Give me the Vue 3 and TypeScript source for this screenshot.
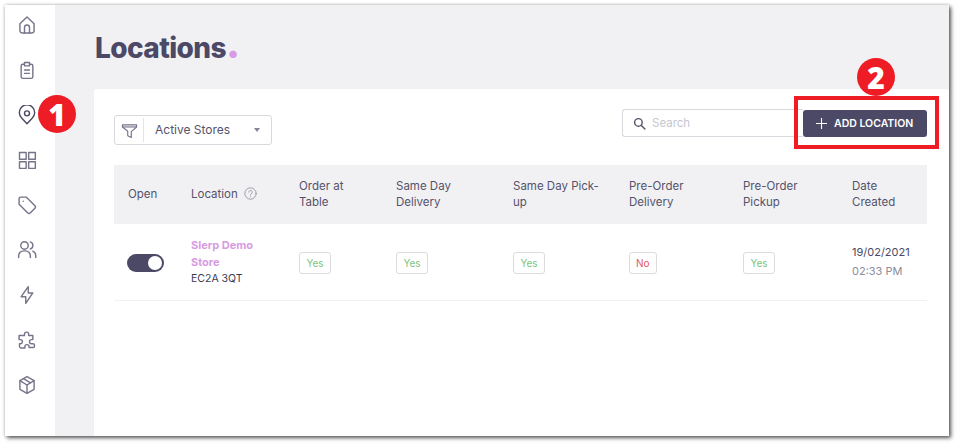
<template>
  <div class="page">
    <div class="window">
      <nav class="sidebar">
        <span v-for="icon in icons" :key="icon.name" class="nav-icon" :class="{ 'is-active': icon.name === 'pin' }">
          <svg width="20" height="20" viewBox="0 0 24 24" fill="none" stroke="currentColor" stroke-width="1.7" stroke-linecap="round" stroke-linejoin="round">
            <path v-for="d in icon.paths" :key="d" :d="d" />
          </svg>
        </span>
      </nav>

      <main class="main">
        <h1 class="title">Locations<span class="title__dot">.</span></h1>

        <section class="card">
          <div class="toolbar">
            <div class="filter">
              <span class="filter__icon">
                <svg width="17" height="17" viewBox="0 0 24 24" fill="none" stroke="currentColor" stroke-width="1.6" stroke-linejoin="round">
                  <path d="M2 4h20v3l-7.5 6.5V22l-5-2.500v-6.500L2 7z" />
                  <path d="M2 7h20" />
                </svg>
              </span>
              <span class="filter__label">Active Stores</span>
              <span class="filter__caret"></span>
            </div>

            <div class="actions">
              <label class="search">
                <svg width="13" height="13" viewBox="0 0 24 24" fill="none" stroke="#55536b" stroke-width="2.600" stroke-linecap="round">
                  <circle cx="10" cy="10" r="7" />
                  <path d="M15.500 15.500L22 22" />
                </svg>
                <span class="search__placeholder">Search</span>
              </label>
              <button type="button" class="add-button">
                <svg width="11" height="11" viewBox="0 0 11 11" stroke="#fff" stroke-width="1.100">
                  <path d="M5.500 0v11M0 5.500h11" />
                </svg>
                ADD LOCATION
              </button>
            </div>
          </div>

          <div class="table">
            <div class="table__head">
              <div v-for="col in columns" :key="col" class="th">
                <span>{{ col }}</span>
                <svg v-if="col === 'Location'" class="help" width="13" height="13" viewBox="0 0 24 24" fill="none" stroke="#9a99a8" stroke-width="1.800" stroke-linecap="round">
                  <circle cx="12" cy="12" r="10.500" />
                  <path d="M8.800 9.500a3.200 3.200 0 1 1 4.800 2.800c-1 .6-1.600 1.200-1.600 2.400M12 18v.1" />
                </svg>
              </div>
            </div>

            <div class="table__row">
              <div class="td td--nudged">
                <span class="toggle"><span class="toggle__knob"></span></span>
              </div>
              <div class="td">
                <a class="store-name">Slerp Demo Store</a>
                <div class="postcode">EC2A 3QT</div>
              </div>
              <div v-for="(flag, i) in flags" :key="i" class="td td--nudged">
                <span class="flag" :class="flag === 'Yes' ? 'flag--yes' : 'flag--no'">{{ flag }}</span>
              </div>
              <div class="td">
                <div class="date">19/02/2021</div>
                <div class="time">02:33 PM</div>
              </div>
            </div>
          </div>
        </section>
      </main>

      <span class="badge badge--one">1</span>
      <span class="badge badge--two">2</span>
      <span class="highlight"></span>
    </div>
  </div>
</template>

<script setup lang="ts">
const columns = [
  'Open',
  'Location',
  'Order at Table',
  'Same Day Delivery',
  'Same Day Pick-up',
  'Pre-Order Delivery',
  'Pre-Order Pickup',
  'Date Created',
]

const flags = ['Yes', 'Yes', 'Yes', 'No', 'Yes']

const icons = [
  {
    name: 'home',
    paths: [
      'M3.500 10.500L12 2.500l8.500 8V19a2.500 2.500 0 0 1-2.500 2.500H6A2.500 2.500 0 0 1 3.500 19z',
      'M9 21.500V15a3 3 0 0 1 6 0v6.500',
    ],
  },
  {
    name: 'clipboard',
    paths: [
      'M8.500 5H7a2 2 0 0 0-2 2v13a2 2 0 0 0 2 2h10a2 2 0 0 0 2-2V7a2 2 0 0 0-2-2h-1.500',
      'M9 3h6v4H9z',
      'M9 12h6M9 16h6',
    ],
  },
  {
    name: 'pin',
    paths: [
      'M12 22.500l-6.200-6.700a9.200 9.200 0 1 1 12.400 0z',
      'M12 13a3 3 0 1 0 0-6 3 3 0 0 0 0 6z',
    ],
  },
  {
    name: 'grid',
    paths: ['M3 3h8v8H3z', 'M14 3h8v8h-8z', 'M3 14h8v8H3z', 'M14 14h8v8h-8z'],
  },
  {
    name: 'tag',
    paths: [
      'M2.500 4.500a2 2 0 0 1 2-2h6.500l10.500 10.500a2 2 0 0 1 0 2.800l-5.700 5.700a2 2 0 0 1-2.800 0L2.500 11z',
      'M7.500 7.500v.1',
    ],
  },
  {
    name: 'users',
    paths: [
      'M2 21v-2a6 6 0 0 1 6-6h2a6 6 0 0 1 6 6v2',
      'M9 11a4.500 4.500 0 1 0 0-9 4.500 4.500 0 0 0 0 9z',
      'M16 2.300a4.500 4.500 0 0 1 0 8.500',
      'M19 13.400a6 6 0 0 1 3.500 5.600v2',
    ],
  },
  {
    name: 'zap',
    paths: ['M13.500 2v7.500H19L10.500 22v-8H5z'],
  },
  {
    name: 'puzzle',
    paths: [
      'M9 5a2.500 2.500 0 0 1 5 0v1.500h5v5h-1.500a2.500 2.500 0 0 0 0 5H19a2 2 0 0 1 2 2v1a1.500 1.500 0 0 1-1.500 1.500h-5V20a2.500 2.500 0 0 0-5 0v1.500h-5a2 2 0 0 1-1.500-2v-3H4a2.500 2.500 0 0 0 0-5H2.500v-5H9z',
    ],
  },
  {
    name: 'box',
    paths: [
      'M12 2l8.500 4.800v10.400L12 22l-8.500-4.800V6.800z',
      'M3.500 6.800L12 12l8.500-5.200',
      'M12 12v10',
      'M7.800 4.400l8.400 5',
    ],
  },
]
</script>

<style>
html,
body {
  margin: 0;
  background: #fff;
}
</style>

<style scoped>
.page {
  width: 958px;
  height: 445px;
  padding: 5px 0 0 5px;
  box-sizing: border-box;
  overflow: hidden;
  font-family: Inter, "Open Sans", sans-serif;
  color: #4b4966;
}

.window {
  position: relative;
  display: flex;
  width: 944px;
  height: 431px;
  background: #f1f1f4;
  box-shadow: 2px 2px 4px rgba(40, 40, 40, 0.75), 0 0 3px rgba(40, 40, 40, 0.25);
}

.sidebar {
  display: flex;
  flex-direction: column;
  align-items: center;
  gap: 25px;
  width: 50px;
  flex: none;
  box-sizing: border-box;
  padding: 10px 6px 0 0;
  background: #fff;
}

.nav-icon {
  display: flex;
  align-items: center;
  justify-content: center;
  width: 22px;
  height: 20px;
  color: #75748a;
}

.nav-icon.is-active {
  color: #4b4966;
}

.main {
  display: flex;
  flex-direction: column;
  flex: 1;
  min-width: 0;
  padding-left: 39px;
}

.title {
  height: 84px;
  margin: 0;
  padding: 23px 0 0 1px;
  box-sizing: border-box;
  font-size: 28px;
  line-height: 40px;
  font-weight: 800;
  letter-spacing: -0.6px;
  color: #4b4966;
}

.title__dot {
  color: #d89be3;
  font-size: 40px;
  line-height: 20px;
}

.card {
  flex: 1;
  padding: 20px 22px 0 20px;
  background: #fff;
  border-radius: 3px 3px 0 0;
}

.toolbar {
  display: flex;
  justify-content: space-between;
  align-items: flex-start;
  height: 56px;
}

.filter {
  display: flex;
  align-items: center;
  width: 158px;
  height: 30px;
  margin-top: 6px;
  box-sizing: border-box;
  border: 1px solid #d8d8de;
  border-radius: 3px;
  font-size: 12px;
}

.filter__icon {
  display: flex;
  align-items: center;
  justify-content: center;
  width: 28px;
  height: 24px;
  border-right: 1px solid #e4e4e8;
  color: #75748a;
}

.filter__label {
  flex: 1;
  padding: 0 0 1px 11px;
  color: #55536b;
}

.filter__caret {
  width: 0;
  height: 0;
  margin-right: 11px;
  border: 3.500px solid transparent;
  border-top: 4px solid #85849a;
  border-bottom: 0;
}

.actions {
  display: flex;
  align-items: center;
}

.search {
  display: flex;
  align-items: center;
  gap: 6px;
  width: 181px;
  height: 28px;
  padding-left: 10px;
  box-sizing: border-box;
  border: 1px solid #d8d8de;
  border-right: 0;
  border-radius: 3px 0 0 3px;
  font-size: 11.500px;
}

.search__placeholder {
  color: #c6c6d0;
}

.add-button {
  display: flex;
  align-items: center;
  gap: 7px;
  width: 124px;
  height: 27px;
  padding: 0 0 0 13px;
  border: 0;
  border-radius: 3px;
  background: #4b4966;
  color: #fff;
  font-family: inherit;
  font-size: 10.500px;
  font-weight: 600;
  white-space: nowrap;
}

.table__head,
.table__row {
  display: grid;
  grid-template-columns: 63px 108px 97px 117px 116px 114px 109px 75px;
  padding-left: 14px;
}

.table__head {
  align-items: center;
  height: 59px;
  box-sizing: border-box;
  padding-bottom: 2px;
  background: #f1f1f4;
}

.th {
  display: flex;
  align-items: center;
  gap: 6px;
  padding-right: 22px;
  font-size: 11.500px;
  line-height: 16px;
  color: #55536b;
}

.help {
  flex: none;
}

.table__row {
  align-items: center;
  height: 76px;
  border-bottom: 1px solid #f1f1f4;
}

.td {
  font-size: 11px;
}

.td--nudged {
  padding-top: 2px;
}

.toggle {
  display: flex;
  align-items: center;
  justify-content: flex-end;
  width: 37px;
  height: 18px;
  margin-left: -1px;
  padding-right: 2px;
  box-sizing: border-box;
  border-radius: 9px;
  background: #4b4966;
}

.toggle__knob {
  width: 14px;
  height: 14px;
  border-radius: 50%;
  background: #fff;
}

.store-name {
  display: block;
  width: 80px;
  font-size: 11px;
  line-height: 17px;
  font-weight: 700;
  color: #d89be3;
}

.postcode {
  font-size: 10.500px;
  line-height: 16px;
  color: #3c3b52;
}

.flag {
  display: block;
  width: fit-content;
  height: 22px;
  padding: 0 6px;
  box-sizing: border-box;
  border: 1px solid #dcdce0;
  border-radius: 3px;
  font-size: 10px;
  line-height: 20px;
}

.flag--yes {
  padding: 0 6.500px;
  color: #7cc480;
}

.flag--no {
  color: #e25a5a;
}

.date {
  font-size: 11px;
  line-height: 19px;
  color: #4b4966;
}

.time {
  font-size: 11px;
  line-height: 19px;
  color: #8d8c9c;
}

.badge {
  position: absolute;
  display: flex;
  align-items: center;
  justify-content: center;
  width: 38px;
  height: 38px;
  border-radius: 50%;
  background: #ee1c25;
  color: #fff;
  font-family: "Open Sans", sans-serif;
  font-size: 30px;
  font-weight: 800;
}

.badge--one {
  left: 33px;
  top: 90px;
}

.badge--two {
  left: 852px;
  top: 53px;
}

.highlight {
  position: absolute;
  left: 789px;
  top: 91px;
  width: 145px;
  height: 53px;
  box-sizing: border-box;
  border: 4px solid #ee1c25;
}
</style>
